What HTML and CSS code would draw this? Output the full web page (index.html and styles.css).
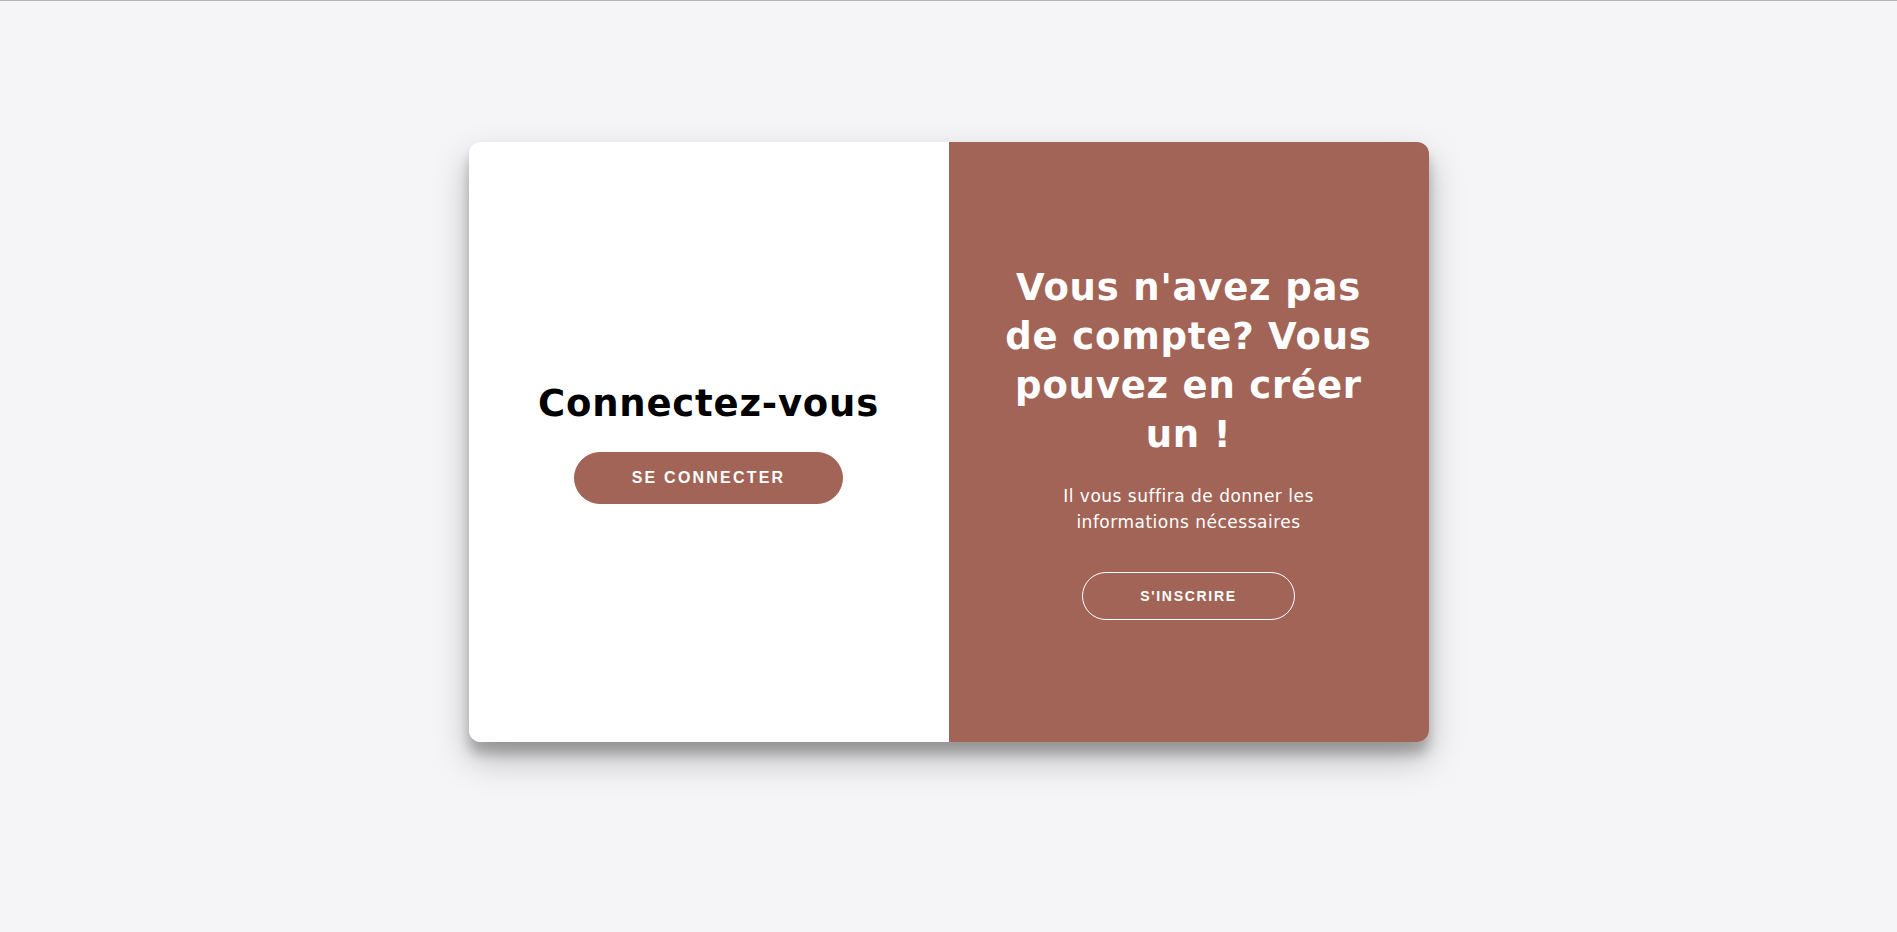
FILE: index.html
```html
<!DOCTYPE html>
<html lang="fr">
<head>
<meta charset="utf-8">
<title>Connexion</title>
<link rel="stylesheet" href="styles.css">
</head>
<body>
  <div class="card">
    <section class="panel panel-signin">
      <h1 class="title">Connectez-vous</h1>
      <button class="btn btn-filled" type="button">Se connecter</button>
    </section>
    <section class="panel panel-signup">
      <h1 class="title title-light">Vous n'avez pas<br>de compte? Vous<br>pouvez en créer<br>un !</h1>
      <p class="lead">Il vous suffira de donner les<br>informations nécessaires</p>
      <button class="btn btn-ghost" type="button">S'inscrire</button>
    </section>
  </div>
</body>
</html>
```

FILE: styles.css
```css
* { box-sizing: border-box; }

html, body { margin: 0; }

body {
  height: 100vh;
  background: #f5f5f7;
  border-top: 1px solid #b5b5b9;
  padding-bottom: 50px;
  display: flex;
  align-items: center;
  justify-content: center;
  font-family: "DejaVu Sans", "Noto Sans", sans-serif;
}

.card {
  width: 960px;
  height: 600px;
  display: flex;
  border-radius: 12px;
  overflow: hidden;
  box-shadow: 0 17px 35px rgba(0, 0, 0, 0.25), 0 12px 12px rgba(0, 0, 0, 0.22);
}

.panel {
  flex: 1 1 0;
  display: flex;
  flex-direction: column;
  align-items: center;
  justify-content: center;
  text-align: center;
  padding: 0 50px;
}

.panel-signin { background: #ffffff; }

.panel-signup { background: #a26457; color: #ffffff; }

.title {
  margin: 0;
  font-size: 37px;
  font-weight: bold;
  letter-spacing: 0.8px;
  line-height: 49px;
  color: #000000;
}

.title-light { color: #ffffff; }

.lead {
  margin: 24px 0 37px;
  font-size: 17px;
  line-height: 26px;
  letter-spacing: 0.5px;
  font-weight: normal;
}

.btn {
  font-family: "Liberation Sans", Arial, sans-serif;
  font-weight: bold;
  text-transform: uppercase;
  cursor: pointer;
  border-radius: 30px;
}

.btn-filled {
  margin-top: 24px;
  width: 269px;
  height: 52px;
  background: #a26457;
  border: 1px solid #a26457;
  color: #ffffff;
  font-size: 16px;
  letter-spacing: 2.2px;
}

.btn-ghost {
  width: 213px;
  height: 48px;
  background: transparent;
  border: 1px solid #ffffff;
  color: #ffffff;
  font-size: 14px;
  letter-spacing: 1.7px;
}
```
